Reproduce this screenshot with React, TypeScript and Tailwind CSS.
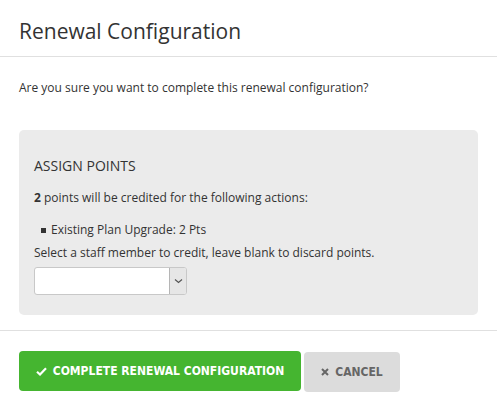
import React from "react";

export default function App() {
  return (
    <div className="w-[497px] h-[415px] bg-white text-[#333] font-['Open_Sans',sans-serif] border-t border-transparent">
      {/* header */}
      <div className="h-[56px] border-b border-[#e0e0e0] px-[19px] pt-[15px]">
        <h2 className="text-[21px] leading-[30px] text-[#333]">Renewal Configuration</h2>
      </div>

      {/* body */}
      <div className="px-[19px] pt-[22px] pb-[15px] border-b border-[#e0e0e0]">
        <p className="text-[12px] leading-[18px] mb-[33px]">
          Are you sure you want to complete this renewal configuration?
        </p>

        <div className="rounded-[5px] bg-[#ebebeb] px-[15px] pt-[26px] pb-[20px]">
          <h4 className="text-[14px] leading-[20px] mb-[13px]">ASSIGN POINTS</h4>
          <p className="text-[12px] leading-[18px] mb-[14px]">
            <b>2</b> points will be credited for the following actions:
          </p>
          <ul className="mb-[5px] pl-[7px]">
            <li className="flex items-center text-[12px] leading-[18px]">
              <span className="w-[5px] h-[5px] bg-[#333] mr-[5px]" />
              Existing Plan Upgrade: 2 Pts
            </li>
          </ul>
          <p className="text-[12px] leading-[18px] mb-[5px]">
            Select a staff member to credit, leave blank to discard points.
          </p>
          <div className="flex w-[153px] h-[28px] rounded-[3px] border border-[#c8c8c8] bg-white overflow-hidden">
            <div className="flex-1" />
            <div className="w-[17px] border-l border-[#b5b5b5] bg-[#e6e6e6] flex items-center justify-center">
              <svg width="9" height="6" viewBox="0 0 9 6">
                <path d="M1 1.5 L4.5 4.5 L8 1.5" fill="none" stroke="#555" strokeWidth="1.2" />
              </svg>
            </div>
          </div>
        </div>
      </div>

      {/* footer */}
      <div className="px-[19px] pt-[20px] flex gap-[3px] items-start">
        <button className="h-[40px] w-[282px] rounded-[4px] bg-[#45b530] text-white flex items-center justify-center gap-[6px] font-['DejaVu_Sans_Condensed','DejaVu_Sans',sans-serif] font-bold text-[12px]">
          <svg width="11" height="9" viewBox="0 0 11 9">
            <path d="M1 4.8 L4 7.5 L10 1.3" fill="none" stroke="white" strokeWidth="2.2" />
          </svg>
          COMPLETE RENEWAL CONFIGURATION
        </button>
        <button className="mt-[1px] h-[40px] w-[96px] rounded-[4px] bg-[#dcdcdc] text-[#666] flex items-center justify-center gap-[6px] font-['DejaVu_Sans_Condensed','DejaVu_Sans',sans-serif] font-bold text-[12px]">
          <svg width="8" height="8" viewBox="0 0 8 8">
            <path d="M1 1 L7 7 M7 1 L1 7" stroke="#666" strokeWidth="2" />
          </svg>
          CANCEL
        </button>
      </div>
    </div>
  );
}
